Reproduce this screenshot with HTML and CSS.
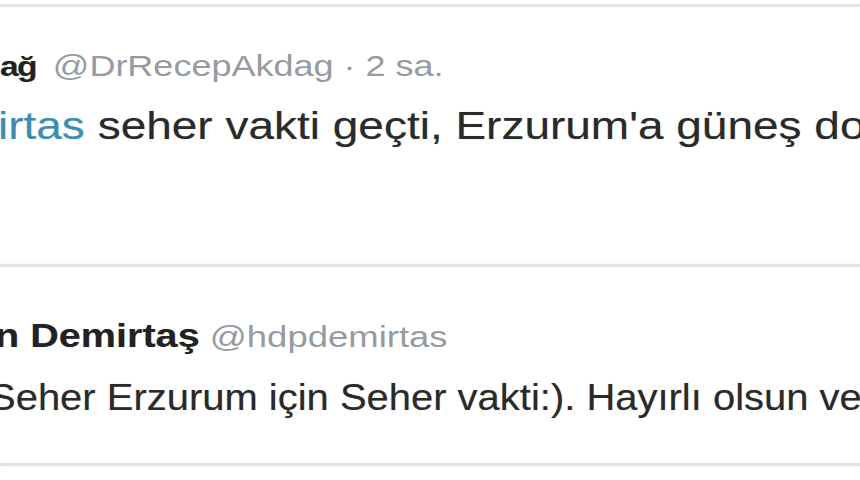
FILE: index.html
```html
<!DOCTYPE html>
<html lang="tr">
<head>
<meta charset="utf-8">
<title>Tweets</title>
<link rel="stylesheet" href="styles.css">
</head>
<body>
<div class="feed">
  <div class="rule rule-top"></div>
  <article class="tweet tweet-first">
    <div class="head head-first"><span class="name">ağ</span> <span class="handle">@DrRecepAkdag · 2 sa.</span></div>
    <p class="text text-first"><span class="link">irtas</span> seher vakti geçti, Erzurum'a güneş do</p>
  </article>
  <div class="rule"></div>
  <article class="tweet tweet-second">
    <div class="head head-second"><span class="name">n Demirtaş</span> <span class="handle">@hdpdemirtas</span></div>
    <p class="text text-second">Seher Erzurum için Seher vakti:). Hayırlı olsun vek</p>
  </article>
  <div class="rule"></div>
</div>
</body>
</html>
```

FILE: styles.css
```css
html, body {
  margin: 0;
  padding: 0;
  background: #ffffff;
}
body {
  width: 860px;
  height: 480px;
  overflow: hidden;
  font-family: "Liberation Sans", Arial, sans-serif;
  color: #2b2b2b;
}
.feed {
  width: 860px;
  display: flex;
  flex-direction: column;
  padding-top: 4px;
}
.rule {
  height: 3px;
  background: #e3e3e3;
  box-shadow: 0 0 2px #ebebeb;
}
.tweet {
  white-space: nowrap;
  overflow: hidden;
}
.tweet-first {
  padding: 41px 0 116px 0;
}
.tweet-second {
  padding: 51px 0 43px 0;
}
.head {
  line-height: 36px;
  height: 36px;
  transform-origin: 0 0;
}
.head-first {
  font-size: 30px;
  transform: scaleX(1.2);
}
.head-first .name {
  font-size: 28px;
  letter-spacing: -1.5px;
  margin-right: 6px;
}
.head-second {
  font-size: 30.4px;
  transform: scaleX(1.2);
  margin-left: -5px;
}
.head-second .name {
  font-size: 33px;
}
.name {
  font-weight: bold;
  color: #222222;
  text-shadow: 0 0 1px rgba(0, 0, 0, 0.25);
}
.handle {
  color: #979a9f;
}
.text {
  margin: 20px 0 0 0;
  line-height: 44px;
  height: 44px;
  color: #2a2a2a;
  transform-origin: 0 0;
  text-shadow: 0 0 1px rgba(0, 0, 0, 0.3);
}
.text-first {
  font-size: 38px;
  transform: scaleX(1.21);
  margin-left: -2px;
}
.text-second {
  font-size: 36px;
  transform: scaleX(1.11);
  margin-top: 22px;
  margin-left: -11px;
}
.link {
  color: #3f8cb3;
  text-shadow: 0 0 1px rgba(63, 140, 179, 0.3);
}
```
